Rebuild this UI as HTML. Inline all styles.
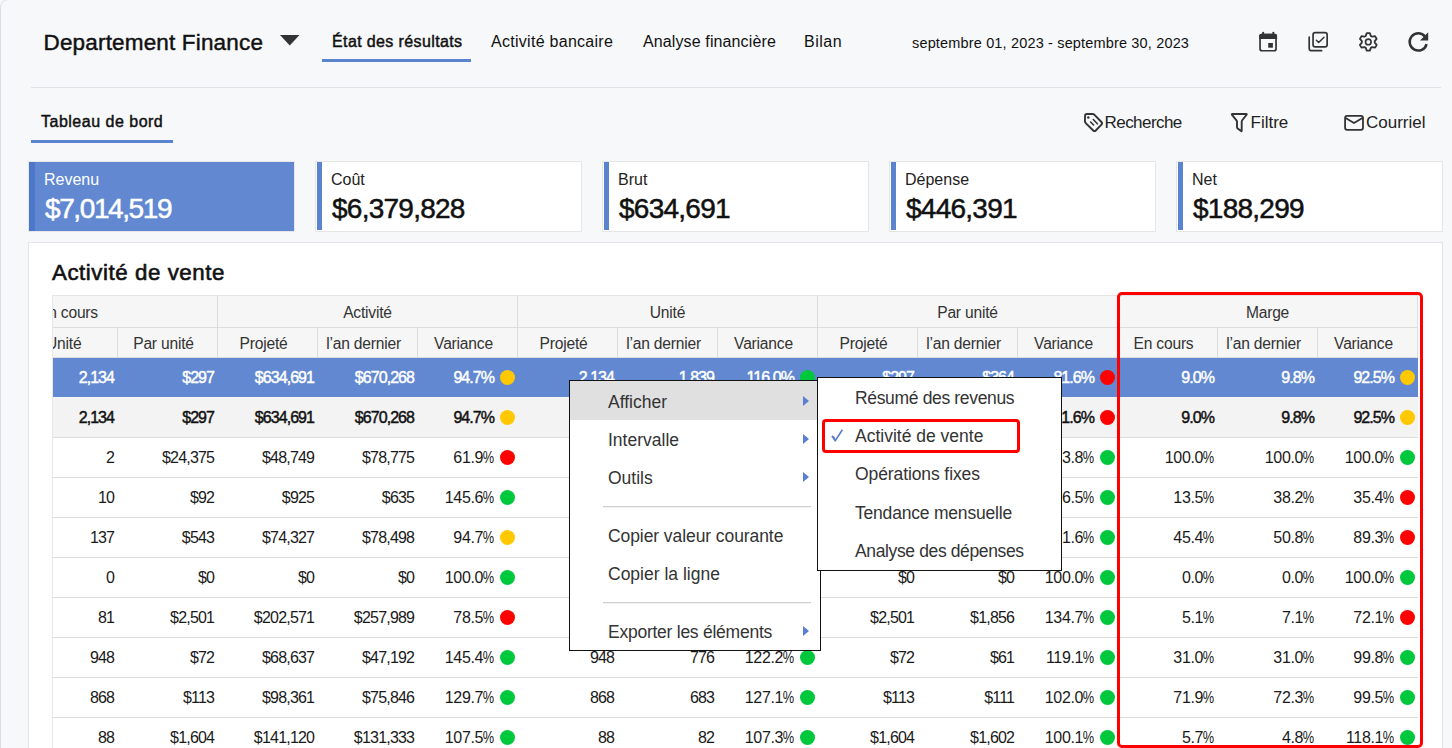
<!DOCTYPE html>
<html><head><meta charset="utf-8">
<style>
*{box-sizing:border-box;margin:0;padding:0}
html,body{width:1452px;height:748px;overflow:hidden;background:#f7f8fa;font-family:"Liberation Sans",sans-serif;color:#1a1a1a}
.abs{position:absolute;white-space:nowrap}
#frame{position:absolute;left:0;top:-1px;width:1500px;height:800px;border:1px solid #dcdde2;border-radius:8.5px}
.t{position:absolute;white-space:nowrap;line-height:1}
.ico{position:absolute}
.card{position:absolute;top:161px;width:267px;height:71px;background:#fff;border:1px solid #e6e6e9}
.card .bar{position:absolute;left:1px;top:0;width:5px;height:68px;background:#5b84cf}
.card .l{position:absolute;left:15px;top:10px;font-size:16px;color:#222}
.card .n{position:absolute;left:16px;top:32.5px;font-size:28px;letter-spacing:-0.75px;color:#111;-webkit-text-stroke:0.5px #111}
.card.on{background:#6188d1;border-color:#e9e6ea}
.card.on .bar{left:0;width:6px;height:69px;background:#4d77c8}
.card.on .l,.card.on .n{color:#fff;-webkit-text-stroke-color:#fff}
#panel{position:absolute;left:28px;top:242px;width:1415px;height:520px;background:#fff;border:1px solid #e4e4e8}
.hd{position:absolute;background:#f6f6f6;border-bottom:1px solid #dcdcdc;border-right:1px solid #dcdcdc;font-size:15.6px;letter-spacing:-0.2px;color:#333;text-align:center;padding-right:8px;padding-top:1px}
.row{position:absolute;left:52px;width:1366px;height:40px;border-bottom:1px solid #dcdcdc;background:#fff}
.row .c{position:absolute;top:0;height:39px;line-height:39px;text-align:right;padding-right:2.8px;font-size:16px;letter-spacing:-0.8px;color:#1a1a1a}
.row .c.v{padding-right:22.8px}
.row.sel .c,.row.tot .c{padding-right:3px}
.row.sel .c.v,.row.tot .c.v{padding-right:23px}
.row .c i{position:absolute;right:2px;top:12px;width:15px;height:15px;border-radius:50%}
.row.sel{background:#6188d1;border-bottom-color:#f3f3f3}
.row.sel .c{color:#fff;-webkit-text-stroke:0.45px #fff;letter-spacing:-0.95px}
.row.tot{background:#f3f3f3}
.row.tot .c{color:#111;-webkit-text-stroke:0.45px #111;letter-spacing:-0.95px}
.row .c{margin-left:-52px}
.row .c.p{letter-spacing:-0.35px}
.row.sel .c.p,.row.tot .c.p{letter-spacing:-0.95px}
.pc{display:inline-block;transform:scaleX(.8);transform-origin:100% 50%;margin-left:-2.8px}
.row.sel .pc,.row.tot .pc{transform:none;margin-left:0}
#menu{position:absolute;left:569px;top:380px;width:252px;height:271px;background:#fff;border:1px solid #111}
#sub{position:absolute;left:817px;top:377px;width:245px;height:194px;background:#fff;border:1px solid #111}
.mi{position:absolute;left:38px;font-size:17.5px;color:#333;line-height:1}
.arr{position:absolute;left:233px;margin-top:-1.5px;width:0;height:0;border-top:5px solid transparent;border-bottom:5px solid transparent;border-left:6px solid #5b7fd0}
.sep{position:absolute;left:33px;width:208px;height:1px;background:#cfcfcf;box-shadow:0 0.5px 0 #e6e6e6}
</style></head><body>
<div id="frame"></div>

<div class="t" style="left:43.5px;top:31.9px;font-size:22.5px;letter-spacing:0.17px;color:#111;-webkit-text-stroke:0.45px #111">Departement Finance</div>
<svg class="ico" style="left:280px;top:35px" width="20" height="11"><path d="M0 0H19.5L9.75 10.5Z" fill="#333"/></svg>

<div class="t" style="left:332px;top:34px;font-size:16px;letter-spacing:0.38px;color:#111;-webkit-text-stroke:0.45px #111">État des résultats</div>
<div class="abs" style="left:322px;top:59px;width:149px;height:3px;background:#5b84cf"></div>
<div class="t" style="left:491px;top:34px;font-size:16px;letter-spacing:0.28px;color:#111">Activité bancaire</div>
<div class="t" style="left:643px;top:34px;font-size:16px;letter-spacing:0.12px;color:#111">Analyse financière</div>
<div class="t" style="left:804px;top:34px;font-size:16px;letter-spacing:0.5px;color:#111">Bilan</div>
<div class="t" style="left:912px;top:36px;font-size:14.5px;letter-spacing:0.16px;color:#111">septembre 01, 2023 - septembre 30, 2023</div>

<!-- top icons -->
<svg class="ico" style="left:0;top:0" width="1452" height="150" viewBox="0 0 1452 150">
 <g fill="none" stroke="#333">
  <rect x="1260.05" y="34.65" width="16" height="16.1" rx="2" stroke-width="1.7"/>
  <rect x="1313.05" y="32.55" width="14.1" height="14.3" rx="2.2" stroke-width="1.7"/>
  <path d="M1309.2 37.2 V48.5 a2.2 2.2 0 0 0 2.2 2.2 H1321.6" stroke-width="1.7" stroke-linecap="round"/>
  <path d="M1316.4 40.3 L1318.7 42.5 L1324 37.3" stroke-width="1.5" stroke-linecap="round" stroke-linejoin="round"/>
  <path d="M1365.76 35.92 L1366.75 33.14 L1369.85 33.14 L1370.84 35.92 L1372.21 36.71 L1375.12 36.18 L1376.66 38.86 L1374.75 41.11 L1374.75 42.69 L1376.66 44.94 L1375.12 47.62 L1372.21 47.09 L1370.84 47.88 L1369.85 50.66 L1366.75 50.66 L1365.76 47.88 L1364.39 47.09 L1361.48 47.62 L1359.94 44.94 L1361.85 42.69 L1361.85 41.11 L1359.94 38.86 L1361.48 36.18 L1364.39 36.71 Z" stroke-width="1.8" stroke-linejoin="round"/>
  <circle cx="1368.3" cy="41.9" r="2.8" stroke-width="1.6"/>
  <path d="M1425 36.6 A8.6 8.6 0 1 0 1426.6 44.1" stroke-width="2.5"/>
  <path d="M1086.90 114.00 L1092.50 114.00 Q1093.70 114.00 1094.53 114.86 L1101.45 122.01 Q1102.70 123.30 1101.45 124.60 L1095.75 130.50 Q1094.50 131.80 1093.22 130.53 L1085.75 123.14 Q1084.90 122.30 1084.93 121.10 L1085.06 115.80 Q1085.10 114.00 1086.90 114.00 Z" stroke-width="1.9" stroke-linejoin="round"/>
  <path d="M1090.6 122 L1093.6 125 M1093.3 119.5 L1097.4 123.8" stroke-width="1.6" stroke-linecap="round"/>
  <path d="M1232.40 114.00 L1246.20 114.00 Q1247.20 114.00 1246.58 114.78 L1242.20 120.27 Q1241.70 120.90 1241.70 121.70 L1241.70 130.80 Q1241.70 131.60 1241.07 131.11 L1237.63 128.39 Q1237.00 127.90 1237.00 127.10 L1237.00 121.70 Q1237.00 120.90 1236.50 120.28 L1232.03 114.78 Q1231.40 114.00 1232.40 114.00 Z" stroke-width="1.9" stroke-linejoin="round"/>
  <rect x="1345.1" y="115.8" width="17.9" height="14" rx="2" stroke-width="1.8"/>
  <path d="M1345.6 118 L1354 123 L1362.4 117.9" stroke-width="1.8" stroke-linejoin="round"/>
 </g>
 <g fill="#333">
  <path d="M1259.2 38.9 V35.8 a2 2 0 0 1 2 -2 H1275.1 a2 2 0 0 1 2 2 V38.9 Z"/>
  <rect x="1262.2" y="31.7" width="1.9" height="3" rx="0.9"/>
  <rect x="1272.4" y="31.7" width="1.9" height="3" rx="0.9"/>
  <rect x="1268.2" y="43" width="4.7" height="4.7"/>
  <path d="M1428.2 32.3 V40.5 H1420 Z"/>
  <circle cx="1088.3" cy="117.4" r="1.25"/>
 </g>
</svg>

<div class="abs" style="left:31px;top:87px;width:1410px;height:1px;background:#e2e2e6"></div>

<div class="t" style="left:41px;top:114px;font-size:16px;letter-spacing:0.5px;color:#111;-webkit-text-stroke:0.45px #111">Tableau de bord</div>
<div class="abs" style="left:31px;top:140px;width:142px;height:3px;background:#5b84cf"></div>

<!-- toolbar -->
<div class="t" style="left:1104.5px;top:114px;font-size:17px;letter-spacing:-0.55px;color:#222">Recherche</div>
<div class="t" style="left:1250.5px;top:114px;font-size:17px;color:#222">Filtre</div>
<div class="t" style="left:1366px;top:114px;font-size:17px;color:#222">Courriel</div>

<!-- cards -->
<div class="card on" style="left:28px"><div class="bar"></div><div class="t l">Revenu</div><div class="t n" style="letter-spacing:-1.4px">$7,014,519</div></div>
<div class="card" style="left:315px"><div class="bar"></div><div class="t l">Coût</div><div class="t n">$6,379,828</div></div>
<div class="card" style="left:602px"><div class="bar"></div><div class="t l">Brut</div><div class="t n">$634,691</div></div>
<div class="card" style="left:889px"><div class="bar"></div><div class="t l">Dépense</div><div class="t n">$446,391</div></div>
<div class="card" style="left:1176px"><div class="bar"></div><div class="t l">Net</div><div class="t n">$188,299</div></div>

<div id="panel"></div>
<div class="t" style="left:52px;top:262px;font-size:22.3px;letter-spacing:0.55px;color:#111;-webkit-text-stroke:0.6px #111">Activité de vente</div>

<!-- header -->
<div class="abs" style="left:52px;top:295px;width:1366px;height:1px;background:#e4e4e4"></div>
<div class="hd" style="left:52px;top:296px;width:166px;height:32px;text-align:left;line-height:32px;padding-left:0;overflow:hidden"><span style="margin-left:-14px">En cours</span></div>
<div class="hd" style="left:218px;top:296px;width:300px;height:32px;line-height:32px;padding-right:0">Activité</div>
<div class="hd" style="left:518px;top:296px;width:300px;height:32px;line-height:32px;padding-right:0">Unité</div>
<div class="hd" style="left:818px;top:296px;width:300px;height:32px;line-height:32px;padding-right:0">Par unité</div>
<div class="hd" style="left:1118px;top:296px;width:300px;height:32px;line-height:32px;padding-right:0">Marge</div>
<div class="hd" style="left:52px;top:328px;width:66px;height:30px;line-height:30px;text-align:left;overflow:hidden"><span style="margin-left:-6px">Unité</span></div>
<div class="hd" style="left:118px;top:328px;width:100px;height:30px;line-height:30px">Par unité</div>
<div class="hd" style="left:218px;top:328px;width:100px;height:30px;line-height:30px">Projeté</div>
<div class="hd" style="left:318px;top:328px;width:100px;height:30px;line-height:30px">l’an dernier</div>
<div class="hd" style="left:418px;top:328px;width:100px;height:30px;line-height:30px">Variance</div>
<div class="hd" style="left:518px;top:328px;width:100px;height:30px;line-height:30px">Projeté</div>
<div class="hd" style="left:618px;top:328px;width:100px;height:30px;line-height:30px">l’an dernier</div>
<div class="hd" style="left:718px;top:328px;width:100px;height:30px;line-height:30px">Variance</div>
<div class="hd" style="left:818px;top:328px;width:100px;height:30px;line-height:30px">Projeté</div>
<div class="hd" style="left:918px;top:328px;width:100px;height:30px;line-height:30px">l’an dernier</div>
<div class="hd" style="left:1018px;top:328px;width:100px;height:30px;line-height:30px">Variance</div>
<div class="hd" style="left:1118px;top:328px;width:100px;height:30px;line-height:30px">En cours</div>
<div class="hd" style="left:1218px;top:328px;width:100px;height:30px;line-height:30px">l’an dernier</div>
<div class="hd" style="left:1318px;top:328px;width:100px;height:30px;line-height:30px">Variance</div>

<div class="row sel" style="top:358px">
<div class="c" style="left:52px;width:65px">2,134</div>
<div class="c" style="left:117px;width:100px">$297</div>
<div class="c" style="left:217px;width:100px">$634,691</div>
<div class="c" style="left:317px;width:100px">$670,268</div>
<div class="c v p" style="left:417px;width:100px">94.7<span class="pc">%</span><i style="background:#ffc800"></i></div>
<div class="c" style="left:517px;width:100px">2,134</div>
<div class="c" style="left:617px;width:100px">1,839</div>
<div class="c v p" style="left:717px;width:100px">116.0<span class="pc">%</span><i style="background:#00c83c"></i></div>
<div class="c" style="left:817px;width:100px">$297</div>
<div class="c" style="left:917px;width:100px">$364</div>
<div class="c v p" style="left:1017px;width:100px">81.6<span class="pc">%</span><i style="background:#ff0000"></i></div>
<div class="c p" style="left:1117px;width:100px">9.0<span class="pc">%</span></div>
<div class="c p" style="left:1217px;width:100px">9.8<span class="pc">%</span></div>
<div class="c v p" style="left:1317px;width:100px">92.5<span class="pc">%</span><i style="background:#ffc800"></i></div>
</div>
<div class="row tot" style="top:398px">
<div class="c" style="left:52px;width:65px">2,134</div>
<div class="c" style="left:117px;width:100px">$297</div>
<div class="c" style="left:217px;width:100px">$634,691</div>
<div class="c" style="left:317px;width:100px">$670,268</div>
<div class="c v p" style="left:417px;width:100px">94.7<span class="pc">%</span><i style="background:#ffc800"></i></div>
<div class="c" style="left:517px;width:100px">2,134</div>
<div class="c" style="left:617px;width:100px">1,839</div>
<div class="c v p" style="left:717px;width:100px">116.0<span class="pc">%</span><i style="background:#00c83c"></i></div>
<div class="c" style="left:817px;width:100px">$297</div>
<div class="c" style="left:917px;width:100px">$364</div>
<div class="c v p" style="left:1017px;width:100px">81.6<span class="pc">%</span><i style="background:#ff0000"></i></div>
<div class="c p" style="left:1117px;width:100px">9.0<span class="pc">%</span></div>
<div class="c p" style="left:1217px;width:100px">9.8<span class="pc">%</span></div>
<div class="c v p" style="left:1317px;width:100px">92.5<span class="pc">%</span><i style="background:#ffc800"></i></div>
</div>
<div class="row" style="top:438px">
<div class="c" style="left:52px;width:65px">2</div>
<div class="c" style="left:117px;width:100px">$24,375</div>
<div class="c" style="left:217px;width:100px">$48,749</div>
<div class="c" style="left:317px;width:100px">$78,775</div>
<div class="c v p" style="left:417px;width:100px">61.9<span class="pc">%</span><i style="background:#ff0000"></i></div>
<div class="c" style="left:517px;width:100px">2</div>
<div class="c" style="left:617px;width:100px">1</div>
<div class="c v p" style="left:717px;width:100px">200.0<span class="pc">%</span><i style="background:#00c83c"></i></div>
<div class="c" style="left:817px;width:100px">$24,375</div>
<div class="c" style="left:917px;width:100px">$39,388</div>
<div class="c v p" style="left:1017px;width:100px">123.8<span class="pc">%</span><i style="background:#00c83c"></i></div>
<div class="c p" style="left:1117px;width:100px">100.0<span class="pc">%</span></div>
<div class="c p" style="left:1217px;width:100px">100.0<span class="pc">%</span></div>
<div class="c v p" style="left:1317px;width:100px">100.0<span class="pc">%</span><i style="background:#00c83c"></i></div>
</div>
<div class="row" style="top:478px">
<div class="c" style="left:52px;width:65px">10</div>
<div class="c" style="left:117px;width:100px">$92</div>
<div class="c" style="left:217px;width:100px">$925</div>
<div class="c" style="left:317px;width:100px">$635</div>
<div class="c v p" style="left:417px;width:100px">145.6<span class="pc">%</span><i style="background:#00c83c"></i></div>
<div class="c" style="left:517px;width:100px">10</div>
<div class="c" style="left:617px;width:100px">7</div>
<div class="c v p" style="left:717px;width:100px">142.9<span class="pc">%</span><i style="background:#00c83c"></i></div>
<div class="c" style="left:817px;width:100px">$92</div>
<div class="c" style="left:917px;width:100px">$91</div>
<div class="c v p" style="left:1017px;width:100px">106.5<span class="pc">%</span><i style="background:#00c83c"></i></div>
<div class="c p" style="left:1117px;width:100px">13.5<span class="pc">%</span></div>
<div class="c p" style="left:1217px;width:100px">38.2<span class="pc">%</span></div>
<div class="c v p" style="left:1317px;width:100px">35.4<span class="pc">%</span><i style="background:#ff0000"></i></div>
</div>
<div class="row" style="top:518px">
<div class="c" style="left:52px;width:65px">137</div>
<div class="c" style="left:117px;width:100px">$543</div>
<div class="c" style="left:217px;width:100px">$74,327</div>
<div class="c" style="left:317px;width:100px">$78,498</div>
<div class="c v p" style="left:417px;width:100px">94.7<span class="pc">%</span><i style="background:#ffc800"></i></div>
<div class="c" style="left:517px;width:100px">137</div>
<div class="c" style="left:617px;width:100px">145</div>
<div class="c v p" style="left:717px;width:100px">94.5<span class="pc">%</span><i style="background:#ffc800"></i></div>
<div class="c" style="left:817px;width:100px">$543</div>
<div class="c" style="left:917px;width:100px">$541</div>
<div class="c v p" style="left:1017px;width:100px">101.6<span class="pc">%</span><i style="background:#00c83c"></i></div>
<div class="c p" style="left:1117px;width:100px">45.4<span class="pc">%</span></div>
<div class="c p" style="left:1217px;width:100px">50.8<span class="pc">%</span></div>
<div class="c v p" style="left:1317px;width:100px">89.3<span class="pc">%</span><i style="background:#ff0000"></i></div>
</div>
<div class="row" style="top:558px">
<div class="c" style="left:52px;width:65px">0</div>
<div class="c" style="left:117px;width:100px">$0</div>
<div class="c" style="left:217px;width:100px">$0</div>
<div class="c" style="left:317px;width:100px">$0</div>
<div class="c v p" style="left:417px;width:100px">100.0<span class="pc">%</span><i style="background:#00c83c"></i></div>
<div class="c" style="left:517px;width:100px">0</div>
<div class="c" style="left:617px;width:100px">0</div>
<div class="c v p" style="left:717px;width:100px">100.0<span class="pc">%</span><i style="background:#00c83c"></i></div>
<div class="c" style="left:817px;width:100px">$0</div>
<div class="c" style="left:917px;width:100px">$0</div>
<div class="c v p" style="left:1017px;width:100px">100.0<span class="pc">%</span><i style="background:#00c83c"></i></div>
<div class="c p" style="left:1117px;width:100px">0.0<span class="pc">%</span></div>
<div class="c p" style="left:1217px;width:100px">0.0<span class="pc">%</span></div>
<div class="c v p" style="left:1317px;width:100px">100.0<span class="pc">%</span><i style="background:#00c83c"></i></div>
</div>
<div class="row" style="top:598px">
<div class="c" style="left:52px;width:65px">81</div>
<div class="c" style="left:117px;width:100px">$2,501</div>
<div class="c" style="left:217px;width:100px">$202,571</div>
<div class="c" style="left:317px;width:100px">$257,989</div>
<div class="c v p" style="left:417px;width:100px">78.5<span class="pc">%</span><i style="background:#ff0000"></i></div>
<div class="c" style="left:517px;width:100px">81</div>
<div class="c" style="left:617px;width:100px">139</div>
<div class="c v p" style="left:717px;width:100px">58.3<span class="pc">%</span><i style="background:#ff0000"></i></div>
<div class="c" style="left:817px;width:100px">$2,501</div>
<div class="c" style="left:917px;width:100px">$1,856</div>
<div class="c v p" style="left:1017px;width:100px">134.7<span class="pc">%</span><i style="background:#00c83c"></i></div>
<div class="c p" style="left:1117px;width:100px">5.1<span class="pc">%</span></div>
<div class="c p" style="left:1217px;width:100px">7.1<span class="pc">%</span></div>
<div class="c v p" style="left:1317px;width:100px">72.1<span class="pc">%</span><i style="background:#ff0000"></i></div>
</div>
<div class="row" style="top:638px">
<div class="c" style="left:52px;width:65px">948</div>
<div class="c" style="left:117px;width:100px">$72</div>
<div class="c" style="left:217px;width:100px">$68,637</div>
<div class="c" style="left:317px;width:100px">$47,192</div>
<div class="c v p" style="left:417px;width:100px">145.4<span class="pc">%</span><i style="background:#00c83c"></i></div>
<div class="c" style="left:517px;width:100px">948</div>
<div class="c" style="left:617px;width:100px">776</div>
<div class="c v p" style="left:717px;width:100px">122.2<span class="pc">%</span><i style="background:#00c83c"></i></div>
<div class="c" style="left:817px;width:100px">$72</div>
<div class="c" style="left:917px;width:100px">$61</div>
<div class="c v p" style="left:1017px;width:100px">119.1<span class="pc">%</span><i style="background:#00c83c"></i></div>
<div class="c p" style="left:1117px;width:100px">31.0<span class="pc">%</span></div>
<div class="c p" style="left:1217px;width:100px">31.0<span class="pc">%</span></div>
<div class="c v p" style="left:1317px;width:100px">99.8<span class="pc">%</span><i style="background:#00c83c"></i></div>
</div>
<div class="row" style="top:678px">
<div class="c" style="left:52px;width:65px">868</div>
<div class="c" style="left:117px;width:100px">$113</div>
<div class="c" style="left:217px;width:100px">$98,361</div>
<div class="c" style="left:317px;width:100px">$75,846</div>
<div class="c v p" style="left:417px;width:100px">129.7<span class="pc">%</span><i style="background:#00c83c"></i></div>
<div class="c" style="left:517px;width:100px">868</div>
<div class="c" style="left:617px;width:100px">683</div>
<div class="c v p" style="left:717px;width:100px">127.1<span class="pc">%</span><i style="background:#00c83c"></i></div>
<div class="c" style="left:817px;width:100px">$113</div>
<div class="c" style="left:917px;width:100px">$111</div>
<div class="c v p" style="left:1017px;width:100px">102.0<span class="pc">%</span><i style="background:#00c83c"></i></div>
<div class="c p" style="left:1117px;width:100px">71.9<span class="pc">%</span></div>
<div class="c p" style="left:1217px;width:100px">72.3<span class="pc">%</span></div>
<div class="c v p" style="left:1317px;width:100px">99.5<span class="pc">%</span><i style="background:#00c83c"></i></div>
</div>
<div class="row" style="top:718px">
<div class="c" style="left:52px;width:65px">88</div>
<div class="c" style="left:117px;width:100px">$1,604</div>
<div class="c" style="left:217px;width:100px">$141,120</div>
<div class="c" style="left:317px;width:100px">$131,333</div>
<div class="c v p" style="left:417px;width:100px">107.5<span class="pc">%</span><i style="background:#00c83c"></i></div>
<div class="c" style="left:517px;width:100px">88</div>
<div class="c" style="left:617px;width:100px">82</div>
<div class="c v p" style="left:717px;width:100px">107.3<span class="pc">%</span><i style="background:#00c83c"></i></div>
<div class="c" style="left:817px;width:100px">$1,604</div>
<div class="c" style="left:917px;width:100px">$1,602</div>
<div class="c v p" style="left:1017px;width:100px">100.1<span class="pc">%</span><i style="background:#00c83c"></i></div>
<div class="c p" style="left:1117px;width:100px">5.7<span class="pc">%</span></div>
<div class="c p" style="left:1217px;width:100px">4.8<span class="pc">%</span></div>
<div class="c v p" style="left:1317px;width:100px">118.1<span class="pc">%</span><i style="background:#00c83c"></i></div>
</div>
<div class="abs" style="left:52px;top:295px;width:1px;height:460px;background:#e8e8e8"></div>

<!-- red box -->
<div class="abs" style="left:1117px;top:292px;width:306px;height:456px;border:3px solid #f00;border-radius:5px"></div>

<!-- context menu -->
<div id="menu">
 <div class="abs" style="left:0;top:0;width:250px;height:39px;background:#e0e0e0"></div>
 <div class="mi" style="top:13px">Afficher</div><div class="arr" style="top:16px"></div>
 <div class="mi" style="top:51px">Intervalle</div><div class="arr" style="top:54px"></div>
 <div class="mi" style="top:89px">Outils</div><div class="arr" style="top:92px"></div>
 <div class="sep" style="top:125px"></div>
 <div class="mi" style="top:147px;letter-spacing:-0.08px">Copier valeur courante</div>
 <div class="mi" style="top:185px">Copier la ligne</div>
 <div class="sep" style="top:221px"></div>
 <div class="mi" style="top:243px;letter-spacing:-0.25px">Exporter les éléments</div><div class="arr" style="top:246px"></div>
</div>
<div id="sub">
 <div class="mi" style="top:12px;left:37px;letter-spacing:-0.34px">Résumé des revenus</div>
 <div class="abs" style="left:4px;top:41px;width:198px;height:34px;border:3px solid #f00;border-radius:4px"></div>
 <svg class="ico" style="left:12.7px;top:50.7px" width="14" height="14"><path d="M0.9 7.0 L4.3 11.6 L11.4 0.8" fill="none" stroke="#5b7fd0" stroke-width="1.7"/><path d="M1.2 6.6 L3.2 7.6 L4.6 10.3 L3.6 12.2 Z" fill="#5b7fd0"/></svg>
 <div class="mi" style="top:50px;left:37px">Activité de vente</div>
 <div class="mi" style="top:88px;left:37px;letter-spacing:-0.1px">Opérations fixes</div>
 <div class="mi" style="top:126.5px;left:37px;letter-spacing:-0.2px">Tendance mensuelle</div>
 <div class="mi" style="top:165px;left:37px;letter-spacing:-0.37px">Analyse des dépenses</div>
</div>
</body></html>
